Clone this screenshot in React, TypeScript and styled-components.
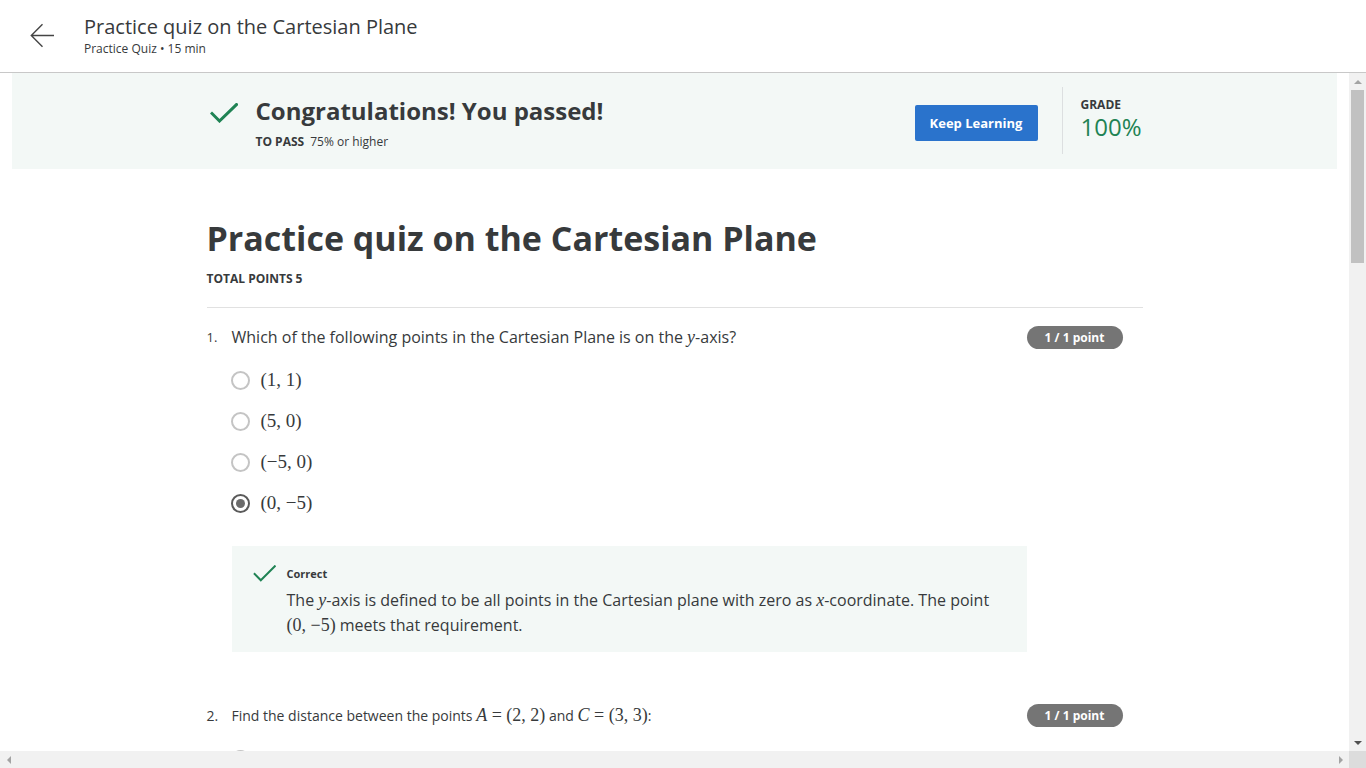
import React from "react";
import styled, { createGlobalStyle } from "styled-components";

const Global = createGlobalStyle`
  html, body { margin: 0; padding: 0; background: #fff; overflow: hidden; }
  body { font-family: "Open Sans", "Noto Sans", sans-serif; color: #373a3c; }
  * { box-sizing: border-box; }
`;

const Shell = styled.div`
  display: flex;
  flex-direction: column;
  height: 768px;
  width: 1366px;
`;

const Header = styled.header`
  height: 73px;
  flex: none;
  display: flex;
  align-items: center;
  border-bottom: 1px solid #c8c8c8;
  background: #fff;
`;

const BackButton = styled.button`
  width: 84px;
  height: 72px;
  border: 0;
  background: none;
  padding: 0 0 0 30px;
  display: flex;
  align-items: center;
  cursor: pointer;
`;

const HeaderText = styled.div`
  display: flex;
  flex-direction: column;
  padding-bottom: 1px;
`;

const HeaderTitle = styled.h1`
  margin: 0;
  font-size: 20px;
  font-weight: 400;
  line-height: 26px;
  color: #373a3c;
`;

const HeaderSub = styled.div`
  margin-top: 1px;
  font-size: 12px;
  line-height: 16px;
  color: #373a3c;
`;

const Viewport = styled.div`
  flex: 1;
  min-height: 0;
  display: grid;
  grid-template-columns: 1fr 17px;
  grid-template-rows: 1fr 17px;
`;

const Pane = styled.main`
  overflow: hidden;
  min-height: 0;
`;

const VBar = styled.div`
  background: #f1f1f1;
  display: flex;
  flex-direction: column;
  align-items: center;
`;

const HBar = styled.div`
  background: #f1f1f1;
  display: flex;
  align-items: center;
  justify-content: space-between;
`;

const Corner = styled.div`
  background: #dcdcdc;
`;

const ArrowBtn = styled.div<{ $dir: "up" | "down" | "left" | "right"; $dark?: boolean }>`
  width: 17px;
  height: 17px;
  flex: none;
  display: flex;
  align-items: center;
  justify-content: center;
  &::after {
    content: "";
    width: 0;
    height: 0;
    ${(p) => {
      const c = p.$dark ? "#505050" : "#a3a3a3";
      switch (p.$dir) {
        case "up":
          return `border-left: 4px solid transparent; border-right: 4px solid transparent; border-bottom: 4px solid ${c};`;
        case "down":
          return `border-left: 4px solid transparent; border-right: 4px solid transparent; border-top: 4px solid ${c};`;
        case "left":
          return `border-top: 4px solid transparent; border-bottom: 4px solid transparent; border-right: 4px solid ${c};`;
        default:
          return `border-top: 4px solid transparent; border-bottom: 4px solid transparent; border-left: 4px solid ${c};`;
      }
    }}
  }
`;

const VThumb = styled.div`
  width: 13px;
  height: 173px;
  background: #c1c1c1;
  flex: none;
`;

const VSpace = styled.div`
  flex: 1;
`;

const Content = styled.div`
  padding: 0 12px;
`;

const Banner = styled.section`
  background: #f3f8f6;
  height: 96px;
  display: flex;
  justify-content: center;
`;

const BannerInner = styled.div`
  width: 936px;
  display: flex;
  align-items: center;
`;

const PassBlock = styled.div`
  flex: 1;
  display: flex;
  align-items: flex-start;
  padding-top: 3px;
`;

const CheckWrap = styled.div`
  width: 49px;
  flex: none;
  display: flex;
  padding: 8px 0 0 3px;
`;

const PassText = styled.div`
  display: flex;
  flex-direction: column;
`;

const PassTitle = styled.h2`
  margin: 0;
  font-size: 24px;
  font-weight: 700;
  line-height: 32px;
  color: #373a3c;
`;

const PassReq = styled.div`
  font-size: 12px;
  line-height: 18px;
  margin-top: 6px;
  color: #373a3c;
  b { font-weight: 700; margin-right: 6px; }
`;

const KeepButton = styled.button`
  background: #2a73cc;
  color: #fff;
  border: 0;
  border-radius: 2px;
  font-family: inherit;
  font-weight: 700;
  font-size: 13px;
  height: 36px;
  width: 123px;
  margin: 4px 24px 0 1px;
  cursor: pointer;
`;

const Divider = styled.div`
  width: 1px;
  align-self: stretch;
  margin: 14px 0 15px;
  background: #dcdfe0;
`;

const GradeBlock = styled.div`
  width: 80px;
  padding-left: 18px;
  display: flex;
  flex-direction: column;
  align-self: flex-start;
  padding-top: 25px;
`;

const GradeLabel = styled.div`
  font-size: 12px;
  font-weight: 700;
  line-height: 14px;
  color: #373a3c;
`;

const GradeValue = styled.div`
  font-size: 24px;
  line-height: 28px;
  margin-top: 1px;
  color: #1f8354;
`;

const Column = styled.div`
  width: 936px;
  margin: 0 auto;
  padding-top: 46px;
  min-height: 2330px;
`;

const QuizTitle = styled.h1`
  margin: 0;
  font-size: 34px;
  font-weight: 700;
  line-height: 46px;
  color: #373a3c;
`;

const TotalPoints = styled.div`
  margin-top: 9px;
  font-size: 12px;
  font-weight: 700;
  line-height: 18px;
  padding-bottom: 19px;
  border-bottom: 1px solid #e1e1e1;
`;

const Question = styled.div<{ $top: number }>`
  padding-top: ${(p) => p.$top}px;
`;

const QuestionRow = styled.div`
  display: flex;
  align-items: center;
`;

const QNum = styled.div<{ $small?: boolean }>`
  width: 25px;
  font-size: ${(p) => (p.$small ? 14 : 13)}px;
  flex: none;
`;

const QText = styled.div<{ $size: number }>`
  flex: 1;
  font-size: ${(p) => p.$size}px;
  line-height: 24px;
  color: #373a3c;
`;

const PointBadge = styled.span`
  flex: none;
  background: #757575;
  color: #fff;
  font-size: 12px;
  font-weight: 700;
  border-radius: 12px;
  width: 96px;
  height: 23px;
  line-height: 23px;
  text-align: center;
  margin-right: 20px;
`;

const Options = styled.div`
  padding-left: 24px;
  margin-top: 18px;
  display: flex;
  flex-direction: column;
  gap: 15px;
`;

const Option = styled.label`
  display: flex;
  align-items: center;
  height: 26px;
  gap: 11px;
`;

const Radio = styled.span<{ $checked?: boolean }>`
  width: 19px;
  height: 19px;
  flex: none;
  border-radius: 50%;
  border: 2px solid ${(p) => (p.$checked ? "#5a5a5a" : "#c4c4c4")};
  display: flex;
  align-items: center;
  justify-content: center;
  &::after {
    content: "";
    display: ${(p) => (p.$checked ? "block" : "none")};
    width: 9px;
    height: 9px;
    border-radius: 50%;
    background: #6b6b6b;
  }
`;

const M = styled.span<{ $size?: number }>`
  font-family: "Liberation Serif", "DejaVu Serif", serif;
  font-size: ${(p) => p.$size ?? 19}px;
  color: #373a3c;
  white-space: nowrap;
  i { font-style: italic; }
`;

const Feedback = styled.div`
  margin: 30px 116px 0 25px;
  background: #f3f8f6;
  padding: 19px 20px 14px 21px;
  display: flex;
  align-items: flex-start;
  gap: 11px;
  svg { flex: none; }
`;

const FeedbackBody = styled.div`
  display: flex;
  flex-direction: column;
  padding-top: 1px;
  min-width: 0;
`;

const FeedbackLabel = styled.div`
  font-size: 11px;
  font-weight: 700;
  line-height: 16px;
  color: #373a3c;
`;

const FeedbackText = styled.div`
  margin-top: 6px;
  font-size: 16px;
  line-height: 25px;
  color: #373a3c;
`;

const Check = ({ w, h, sw }: { w: number; h: number; sw: number }) => (
  <svg width={w} height={h} viewBox="0 0 28 20" fill="none" preserveAspectRatio="none">
    <polyline points="2,10.5 9.5,18 26.5,1.5" stroke="#1f8354" strokeWidth={sw} strokeLinecap="square" />
  </svg>
);

const ArrowLeft = () => (
  <svg width="26" height="26" viewBox="0 0 26 26" fill="none">
    <path d="M1.5 12.5 H24 M12.5 1.3 L1.3 12.5 L12.5 23.7" stroke="#444" strokeWidth="1.4" />
  </svg>
);

export default function App() {
  return (
    <>
      <Global />
      <Shell>
        <Header>
          <BackButton aria-label="Back">
            <ArrowLeft />
          </BackButton>
          <HeaderText>
            <HeaderTitle>Practice quiz on the Cartesian Plane</HeaderTitle>
            <HeaderSub>Practice Quiz • 15 min</HeaderSub>
          </HeaderText>
        </Header>
        <Viewport>
          <Pane>
            <Content>
              <Banner>
                <BannerInner>
                  <PassBlock>
                    <CheckWrap>
                      <Check w={28} h={20} sw={3} />
                    </CheckWrap>
                    <PassText>
                      <PassTitle>Congratulations! You passed!</PassTitle>
                      <PassReq>
                        <b>TO PASS</b>75% or higher
                      </PassReq>
                    </PassText>
                  </PassBlock>
                  <KeepButton>Keep Learning</KeepButton>
                  <Divider />
                  <GradeBlock>
                    <GradeLabel>GRADE</GradeLabel>
                    <GradeValue>100%</GradeValue>
                  </GradeBlock>
                </BannerInner>
              </Banner>
              <Column>
                <QuizTitle>Practice quiz on the Cartesian Plane</QuizTitle>
                <TotalPoints>TOTAL POINTS 5</TotalPoints>

                <Question $top={17}>
                  <QuestionRow>
                    <QNum>1.</QNum>
                    <QText $size={16}>
                      Which of the following points in the Cartesian Plane is on the <M $size={18}><i>y</i></M>-axis?
                    </QText>
                    <PointBadge>1 / 1 point</PointBadge>
                  </QuestionRow>
                  <Options>
                    <Option><Radio /><M>(1, 1)</M></Option>
                    <Option><Radio /><M>(5, 0)</M></Option>
                    <Option><Radio /><M>(−5, 0)</M></Option>
                    <Option><Radio $checked /><M>(0, −5)</M></Option>
                  </Options>
                  <Feedback>
                    <Check w={23} h={17} sw={2.4} />
                    <FeedbackBody>
                      <FeedbackLabel>Correct</FeedbackLabel>
                      <FeedbackText>
                        The <M $size={18}><i>y</i></M>-axis is defined to be all points in the Cartesian plane with zero as <M $size={18}><i>x</i></M>-coordinate. The point <M $size={18}>(0, −5)</M> meets that requirement.
                      </FeedbackText>
                    </FeedbackBody>
                  </Feedback>
                </Question>

                <Question $top={51}>
                  <QuestionRow>
                    <QNum $small>2.</QNum>
                    <QText $size={14}>
                      Find the distance between the points <M $size={18}><i>A</i> = (2, 2)</M> and <M $size={18}><i>C</i> = (3, 3)</M>:
                    </QText>
                    <PointBadge>1 / 1 point</PointBadge>
                  </QuestionRow>
                  <Options>
                    <Option><Radio /><M>2</M></Option>
                    <Option><Radio /><M>√2</M></Option>
                    <Option><Radio /><M>1</M></Option>
                    <Option><Radio /><M>0</M></Option>
                  </Options>
                </Question>
              </Column>
            </Content>
          </Pane>
          <VBar>
            <ArrowBtn $dir="up" />
            <VThumb />
            <VSpace />
            <ArrowBtn $dir="down" $dark />
          </VBar>
          <HBar>
            <ArrowBtn $dir="left" />
            <ArrowBtn $dir="right" />
          </HBar>
          <Corner />
        </Viewport>
      </Shell>
    </>
  );
}
